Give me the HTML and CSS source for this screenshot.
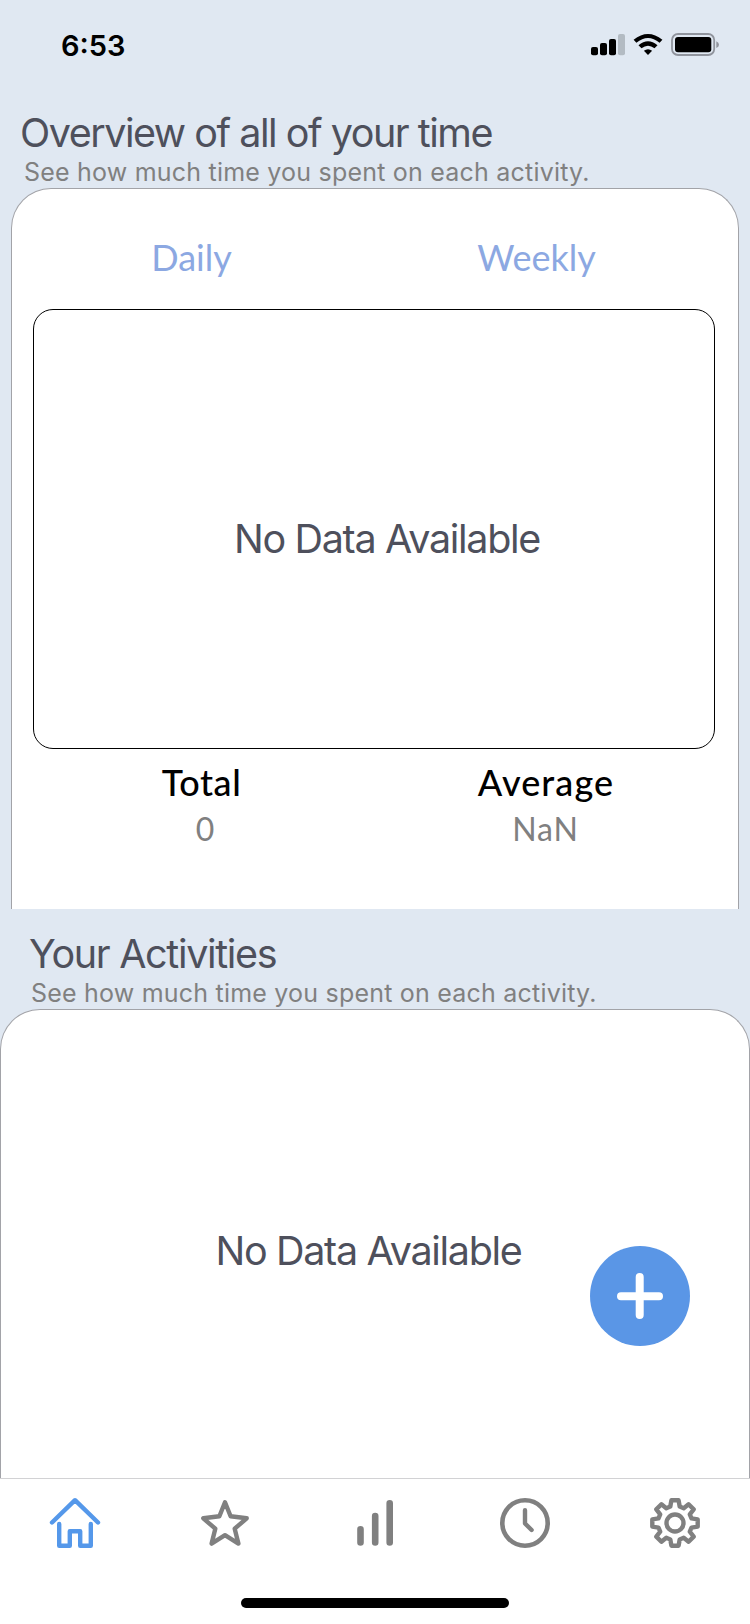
FILE: index.html
```
<!DOCTYPE html>
<html lang="en">
<head>
<meta charset="utf-8">
<title>Overview</title>
<link rel="stylesheet" href="styles.css">
</head>
<body>
<div class="app">
  <header class="status">
    <span class="clock">6:53</span>
    <svg class="status-icons" width="130" height="26" viewBox="590 32 130 26">
      <rect x="591" y="47" width="7" height="8.300" rx="2"/>
      <rect x="600" y="43" width="7" height="12.300" rx="2"/>
      <rect x="609" y="39" width="7" height="16.300" rx="2"/>
      <rect x="618" y="34" width="7" height="21.300" rx="2" fill="#b3bbc3"/>
      <path d="M633.600 39.800Q648 28 662.400 39.800L659.600 42.800Q648 33.400 636.400 42.800Z"/>
      <path d="M638.500 45.200Q648 37.200 657.500 45.200L654.500 48.300Q648 43.100 641.500 48.300Z"/>
      <path d="M643.900 50.800Q648 47.800 652.100 50.800L648 55Z"/>
      <rect x="672" y="34" width="42.200" height="21" rx="6" fill="none" stroke="#90949d" stroke-width="1.800"/>
      <rect x="675" y="37" width="36.300" height="15.300" rx="3"/>
      <path d="M716.300 41.300Q719 42.500 719 44.700T716.300 48Z" fill="#90949d"/>
    </svg>
  </header>

  <section class="overview">
    <h1 class="title">Overview of all of your time</h1>
    <p class="subtitle">See how much time you spent on each activity.</p>
    <div class="card">
      <nav class="tabs">
        <a class="tab daily">Daily</a>
        <a class="tab weekly">Weekly</a>
      </nav>
      <div class="chart"><span class="empty">No Data Available</span></div>
      <dl class="stats">
        <div class="stat"><dt class="total">Total</dt><dd class="total-value">0</dd></div>
        <div class="stat"><dt class="average">Average</dt><dd class="average-value">NaN</dd></div>
      </dl>
    </div>
  </section>

  <section class="activities">
    <h2 class="title second">Your Activities</h2>
    <p class="subtitle indented">See how much time you spent on each activity.</p>
    <div class="panel">
      <span class="empty">No Data Available</span>
      <button class="fab" aria-label="Add">
        <svg width="100" height="100" viewBox="0 0 100 100"><path d="M49.700 31V69M31 50.300H69" stroke="#fff" stroke-width="8" stroke-linecap="round"/></svg>
      </button>
    </div>
  </section>

  <footer class="tabbar">
    <nav class="icons">
      <svg class="icon active" viewBox="0 0 54 54"><path d="M4 26.500 27 4.200 50 26.500M11.200 28V49.800H21.800V35.200H32.200V49.800H42.800V28"/></svg>
      <svg class="icon" viewBox="0 0 54 54"><path d="M27 6.300 32.600 20.300 48.700 22.300 36.700 32.700 40.400 47.600 27 39.200 13.600 47.600 17.300 32.700 5.300 22.300 21.400 20.300Z"/></svg>
      <svg class="icon" viewBox="0 0 54 54"><path d="M12.500 33.300V46.500M27.200 20V46.500M41.700 7.300V46.500" stroke-width="6.600"/></svg>
      <svg class="icon" viewBox="0 0 54 54"><circle cx="27" cy="27" r="22.700" stroke-width="4.600"/><path d="M27 14.200V27.500L33.600 34"/></svg>
      <svg class="icon" viewBox="-27 -27 54 54">
        <circle r="8.500"/>
        <path d="M-3.600 -22.700H3.600L4.700 -16.500L8.700 -14.800L13.600 -18.700L18.700 -13.600L14.800 -8.700L16.500 -4.700L22.700 -3.600V3.600L16.500 4.700L14.800 8.700L18.700 13.600L13.600 18.700L8.700 14.800L4.700 16.500L3.600 22.700H-3.600L-4.700 16.500L-8.700 14.800L-13.600 18.700L-18.700 13.600L-14.800 8.700L-16.500 4.700L-22.700 3.600V-3.600L-16.500 -4.700L-14.800 -8.700L-18.700 -13.600L-13.600 -18.700L-8.700 -14.800L-4.700 -16.500Z"/>
      </svg>
    </nav>
    <div class="home-indicator"></div>
  </footer>
</div>
</body>
</html>
```
FILE: styles.css
```
* { box-sizing: border-box; margin: 0; padding: 0; }

body {
  background: #e0e8f2;
  font-family: Inter, "Liberation Sans", sans-serif;
}

.app {
  width: 750px;
  height: 1624px;
  display: flex;
  flex-direction: column;
  overflow: hidden;
}

.status {
  height: 108px;
  padding: 32px 30px 0 61px;
  display: flex;
  justify-content: space-between;
  align-items: flex-start;
}

.clock {
  font-size: 29px;
  font-weight: 600;
  line-height: 27px;
}

.title {
  height: 50px;
  padding-left: 20px;
  font-size: 39.500px;
  font-weight: 400;
  line-height: 50px;
  letter-spacing: -1.480px;
  color: #4e505c;
  white-space: nowrap;
}

.subtitle {
  height: 30px;
  padding-left: 24px;
  font-size: 25px;
  line-height: 28px;
  letter-spacing: 0.210px;
  color: #808080;
  white-space: nowrap;
}

.card {
  height: 721px;
  margin: 0 11px;
  padding: 0 23px 0 21px;
  background: #fff;
  border: 1px solid #a2a3a8;
  border-bottom: 0;
  border-radius: 40px 40px 0 0;
}

.tabs {
  height: 120px;
  display: grid;
  grid-template-columns: 1fr 1fr;
  align-items: center;
  padding-top: 15px;
}

.tab,
.stats {
  font-family: Lato, "Open Sans", sans-serif;
}

.tab {
  font-size: 36px;
  text-align: center;
  color: #8ca8e2;
  line-height: 44px;
}

.daily { padding-right: 24px; }
.weekly { padding-right: 16px; }

.chart {
  height: 440px;
  display: flex;
  align-items: center;
  justify-content: center;
  padding: 20px 0 0 26px;
  border: 1px solid #000;
  border-radius: 20px;
}

.empty {
  font-size: 39.500px;
  letter-spacing: -1.320px;
  line-height: 50px;
  color: #4e505c;
  white-space: nowrap;
}

.stats {
  display: grid;
  grid-template-columns: 1fr 1fr;
  padding-top: 10px;
  text-align: center;
}

.stat dt {
  font-size: 36px;
  font-weight: 500;
  line-height: 46px;
}

.stat dd {
  font-size: 32px;
  line-height: 48px;
  color: #808080;
}

.stat .total { padding-right: 4px; letter-spacing: 0.600px; }
.stat .average { padding-left: 3px; letter-spacing: 1.100px; }
.stat .total-value { padding-left: 3px; }
.stat .average-value { padding-left: 2px; letter-spacing: 0.900px; }

.second {
  height: 70px;
  padding: 20px 0 0 29px;
  letter-spacing: -1.330px;
}

.indented { padding-left: 31px; }

.panel {
  position: relative;
  height: 469px;
  display: flex;
  justify-content: center;
  padding: 216px 13px 0 0;
  background: #fff;
  border: 1px solid #a2a3a8;
  border-bottom: 0;
  border-radius: 40px 40px 0 0;
}

.fab {
  position: absolute;
  right: 59px;
  top: 236px;
  width: 100px;
  height: 100px;
  border: 0;
  border-radius: 50%;
  background: #5a96e6;
}

.fab svg { display: block; }

.tabbar {
  height: 146px;
  background: #fff;
  border-top: 1px solid #d2d2d4;
}

.icons {
  display: grid;
  grid-template-columns: repeat(5, 1fr);
  justify-items: center;
  padding-top: 17px;
}

.icon {
  width: 54px;
  height: 54px;
  fill: none;
  stroke: #808080;
  stroke-width: 4.400;
  stroke-linecap: round;
  stroke-linejoin: round;
}

.active { stroke: #5598ea; }

.home-indicator {
  width: 268px;
  height: 10px;
  margin: 48px auto 0;
  border-radius: 5px;
  background: #000;
}
```
